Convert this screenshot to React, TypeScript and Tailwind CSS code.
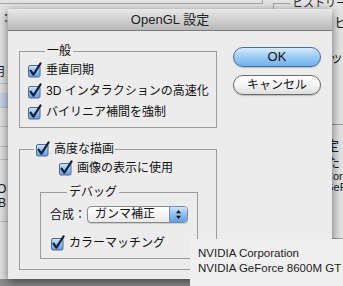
import type { ReactNode } from "react";

const font = "font-['Liberation_Sans','Noto_Sans_CJK_JP',sans-serif]";

function Check() {
  return (
    <svg width="16" height="16" viewBox="0 0 16 16" className="shrink-0">
      <defs>
        <linearGradient id="cb" x1="0" y1="0" x2="0" y2="1">
          <stop offset="0" stopColor="#d6e7fa" />
          <stop offset="0.5" stopColor="#8fbdf0" />
          <stop offset="1" stopColor="#5f9de6" />
        </linearGradient>
      </defs>
      <rect x="1.5" y="3.5" width="11.5" height="11.5" rx="1.5" fill="url(#cb)" stroke="#536a8a" />
      <path d="M3.6 8.6 L6.4 12.6 L13.6 1.4" fill="none" stroke="#17203a" strokeWidth="2.2" strokeLinecap="round" strokeLinejoin="round" />
    </svg>
  );
}

function Row({ children, className = "" }: { children: ReactNode; className?: string }) {
  return (
    <label className={`flex h-[21px] items-center gap-[3px] ${className}`}>
      <Check />
      <span>{children}</span>
    </label>
  );
}

function Background() {
  return (
    <div className="absolute left-0 top-0 h-[279px] w-full bg-[#e4e4e4] text-[12px] text-[#1a1a1a]">
      {/* top group box edges */}
      <div className="absolute left-0 top-0 h-[4px] w-[263px] border-b border-r border-[#a8a8a8]" />
      <div className="absolute left-[273px] top-[3px] h-[10px] w-[80px] border-l border-t border-[#a8a8a8]" />
      <div className="absolute left-[290px] top-[-5px] whitespace-nowrap bg-[#e4e4e4] px-[2px] text-[11px]">ヒストリー</div>

      {/* left strip */}
      <div className="absolute left-[-12px] top-[12px] flex w-[60px] flex-col">
        <div className="h-[14px] pl-[12px] leading-[14px]">：F</div>
        <div className="h-[39px]" />
        <div className="h-[14px] pl-[5px] leading-[14px]">用</div>
        <div className="h-[5px] border-b border-[#c4c4c4]" />
        <div className="h-[9px]" />
        <div className="h-[15px] border-b border-[#c4c4c4] bg-[#c9d7ea]" />
        <div className="h-[19px] border-b border-[#c4c4c4]" />
        <div className="h-[20px] border-b border-[#c4c4c4]" />
        <div className="h-[13px] border-b border-[#c4c4c4]" />
        <div className="h-[22px]" />
        <div className="h-[14px] pl-[9px] leading-[14px]">O</div>
        <div className="h-[14px] pl-[10px] leading-[14px]">B</div>
        <div className="h-[12px] border-b border-[#c4c4c4]" />
      </div>

      {/* right strip */}
      <div className="absolute left-[330px] top-[15px] flex w-[40px] flex-col text-[13px]">
        <div className="h-[15px] pl-[4px] leading-[15px]">ヒ</div>
        <div className="h-[20px]" />
        <div className="h-[15px] leading-[15px]">ッ</div>
        <div className="h-[60px] border-b border-[#9a9a9a]" />
        <div className="h-[12px]" />
        <div className="h-[17px] whitespace-nowrap leading-[17px]">
          <span className="ml-[-4px]">定</span>
        </div>
        <div className="h-[17px] whitespace-nowrap leading-[17px]">
          <span className="ml-[-3px]">た</span>
        </div>
        <div className="h-[11px] whitespace-nowrap text-[11px] leading-[11px]">
          <span className="ml-[-5px]">Corp</span>
        </div>
        <div className="h-[11px] whitespace-nowrap text-[11px] leading-[11px]">
          <span className="ml-[-5px]">GeF</span>
        </div>
      </div>
      <div className="absolute bottom-0 right-0 h-[41px] w-[11px] bg-[#a3a3a3]" />
    </div>
  );
}

function Popup() {
  return (
    <div className="flex h-[17px] w-[101px] overflow-hidden rounded-[4px] border border-[#8a8a8a] bg-gradient-to-b from-white to-[#e9e9e9] shadow-[0_1px_1px_rgba(0,0,0,0.15)]">
      <span className="flex-1 pl-[7px] text-[12px] leading-[15px]">ガンマ補正</span>
      <span className="flex w-[18px] items-center justify-center border-l border-[#6d8fb8] bg-gradient-to-b from-[#cfe4fb] via-[#8cbdf1] to-[#5e9fe8]">
        <svg width="7" height="11" viewBox="0 0 7 11">
          <path d="M3.5 1 L6 4.3 L1 4.3 Z M3.5 10 L6 6.7 L1 6.7 Z" fill="#111" />
        </svg>
      </span>
    </div>
  );
}

function Dialog() {
  return (
    <div className="absolute left-[8px] top-[9px] flex h-[270px] w-[324px] flex-col bg-[#ececec] shadow-[0_3px_10px_rgba(0,0,0,0.55)]">
      <div className="flex h-[22px] shrink-0 items-center justify-center border-b border-[#7a7a7a] bg-gradient-to-b from-[#e8e8e8] to-[#b9b9b9] text-[13px] text-[#222]">
        OpenGL 設定
      </div>
      <div className="flex text-[12px] text-[#111]">
        <div className="ml-[11px] flex flex-col">
          <fieldset className="mt-[12px] w-[198px] border border-[#9c9c9c] pb-[5px] pl-[7px]">
            <legend className="ml-[18px] px-[2px] text-[12px] leading-[16px]">一般</legend>
            <Row>垂直同期</Row>
            <Row>3D インタラクションの高速化</Row>
            <Row>バイリニア補間を強制</Row>
          </fieldset>

          <fieldset className="mt-[13px] w-[198px] border border-[#9c9c9c] pb-[10px]">
            <legend className="ml-[14px] flex items-center gap-[3px] px-[1px] leading-[16px]">
              <Check />
              <span>高度な描画</span>
            </legend>
            <Row className="h-[20px] pl-[38px]">画像の表示に使用</Row>
            <fieldset className="ml-[20px] mt-[6px] w-[158px] border border-[#9c9c9c] pb-[5px] pl-[9px]">
              <legend className="ml-[17px] px-[2px] leading-[16px]">デバッグ</legend>
              <div className="mt-[6px] flex h-[17px] items-center">
                <span className="w-[37px]">合成：</span>
                <Popup />
              </div>
              <Row className="mt-[9px] h-[20px]">カラーマッチング</Row>
            </fieldset>
          </fieldset>
        </div>

        <div className="ml-[16px] mt-[16px] flex w-[88px] flex-col gap-[8px]">
          <button className="h-[20px] rounded-full border border-[#4b6f9c] bg-gradient-to-b from-[#d7ebfd] via-[#9ccaf4] to-[#6cb2f0] text-[13px] leading-[18px] text-[#111] shadow-[0_1px_1px_rgba(0,0,0,0.2)]">
            OK
          </button>
          <button className="h-[20px] rounded-full border border-[#6c6c6c] bg-gradient-to-b from-white via-[#f4f4f4] to-[#dedede] text-[12px] leading-[18px] text-[#111] shadow-[0_1px_1px_rgba(0,0,0,0.2)]">
            キャンセル
          </button>
        </div>
      </div>
    </div>
  );
}

export default function App() {
  return (
    <div className={`relative h-[286px] w-[343px] overflow-hidden bg-[#8e8e8e] ${font}`}>
      <Background />
      <Dialog />
      <div className="absolute bottom-0 left-[190px] right-0 top-[239px] whitespace-nowrap bg-[#efefef] pl-[8px] pt-[7px] text-[11.5px] leading-[15px] text-[#1c1c1c]">
        <div>NVIDIA Corporation</div>
        <div>NVIDIA GeForce 8600M GT</div>
      </div>
    </div>
  );
}
